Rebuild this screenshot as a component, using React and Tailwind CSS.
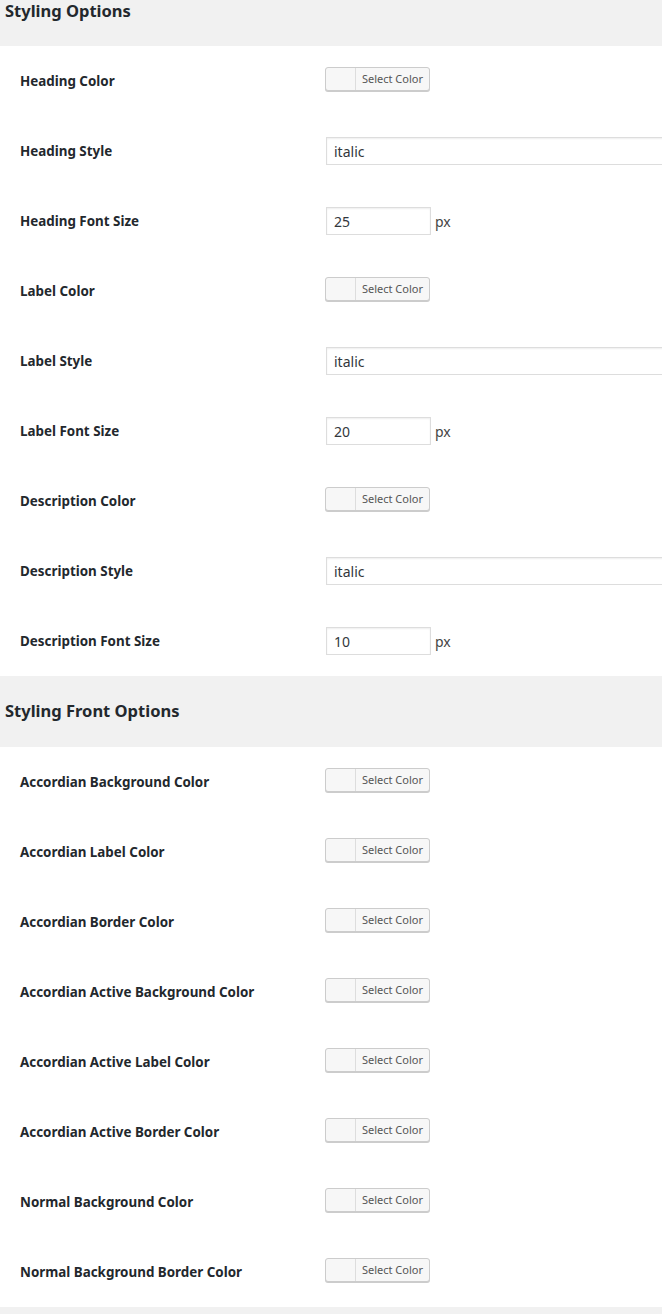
import React from "react";

const font = { fontFamily: '"Noto Sans", "Open Sans", sans-serif' };

// one swatch + "Select Color" button, like the wp color picker
function ColorButton() {
  return (
    <div className="flex h-[24px] w-[105px] -mt-[4px] rounded-[3px] border border-[#cccccc] bg-[#f7f7f7] shadow-[0_1px_0_#cccccc] overflow-hidden">
      <div className="w-[30px] border-r border-[#dddddd]" />
      <div className="flex-1 flex items-center justify-center text-[11px] text-[#555555]">
        Select Color
      </div>
    </div>
  );
}

function TextInput({ value }) {
  return (
    <div className="ml-[1px] h-[28px] w-[400px] shrink-0 flex items-center border border-[#dddddd] bg-white px-[7px] text-[14px] text-[#32373c] shadow-[inset_0_1px_2px_rgba(0,0,0,0.07)]">
      {value}
    </div>
  );
}

function SizeInput({ value }) {
  return (
    <div className="ml-[1px] flex items-center gap-[4px]">
      <div className="h-[28px] w-[105px] flex items-center border border-[#dddddd] bg-white px-[7px] text-[14px] text-[#32373c] shadow-[inset_0_1px_2px_rgba(0,0,0,0.07)]">
        {value}
      </div>
      <span className="text-[14px] text-[#444444]">px</span>
    </div>
  );
}

function Row({ label, children }) {
  return (
    <div className="h-[70px] flex items-center">
      <div className="w-[325px] shrink-0 pl-[20px] text-[13.4px] font-bold text-[#23282d]">
        {label}
      </div>
      <div className="flex-1 min-w-0 flex items-center">{children}</div>
    </div>
  );
}

const styling = [
  ["Heading Color", "color"],
  ["Heading Style", "text", "italic"],
  ["Heading Font Size", "size", "25"],
  ["Label Color", "color"],
  ["Label Style", "text", "italic"],
  ["Label Font Size", "size", "20"],
  ["Description Color", "color"],
  ["Description Style", "text", "italic"],
  ["Description Font Size", "size", "10"],
];

const front = [
  "Accordian Background Color",
  "Accordian Label Color",
  "Accordian Border Color",
  "Accordian Active Background Color",
  "Accordian Active Label Color",
  "Accordian Active Border Color",
  "Normal Background Color",
  "Normal Background Border Color",
];

export default function App() {
  return (
    <div className="w-[662px] h-[1314px] overflow-hidden bg-white" style={font}>
      <div className="h-[46px] bg-[#f1f1f1] px-[5px]">
        <h2 className="text-[16.5px] font-bold text-[#23282d] leading-[22px]">
          Styling Options
        </h2>
      </div>
      {styling.map(([label, kind, value]) => (
        <Row key={label} label={label}>
          {kind === "color" && <ColorButton />}
          {kind === "text" && <TextInput value={value} />}
          {kind === "size" && <SizeInput value={value} />}
        </Row>
      ))}
      <div className="h-[71px] bg-[#f1f1f1] px-[5px] flex items-center">
        <h2 className="text-[16.5px] font-bold text-[#23282d]">
          Styling Front Options
        </h2>
      </div>
      {front.map((label) => (
        <Row key={label} label={label}>
          <ColorButton />
        </Row>
      ))}
      <div className="h-[20px] bg-[#f1f1f1]" />
    </div>
  );
}
